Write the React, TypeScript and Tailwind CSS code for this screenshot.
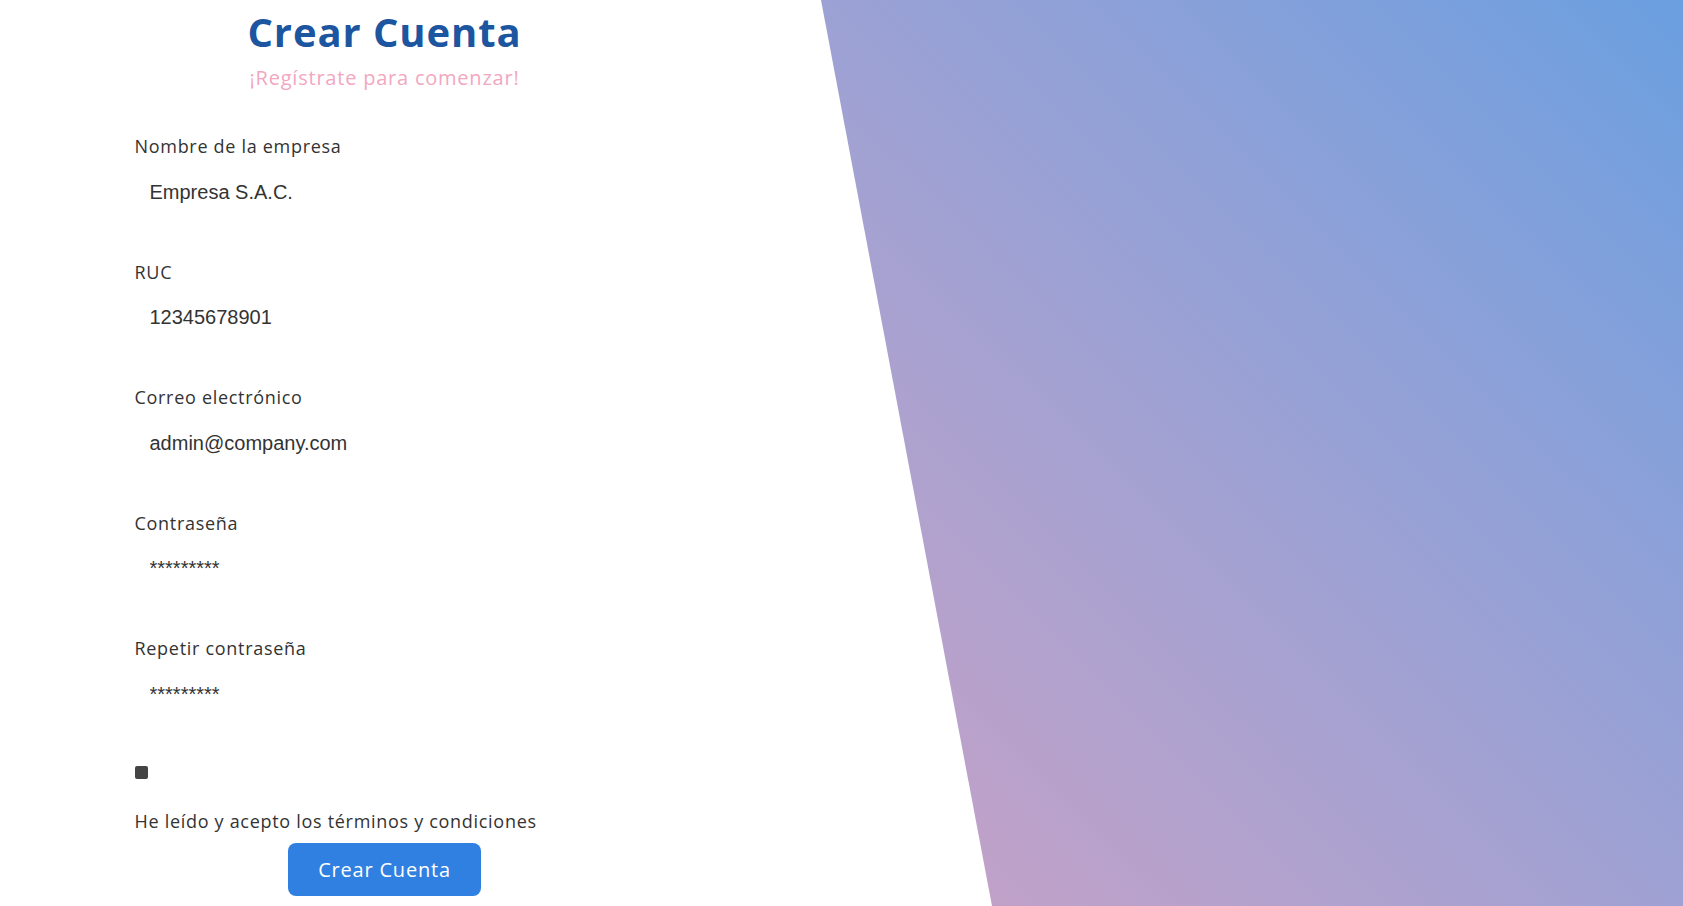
import React from "react";

const Field = ({ label, value }: { label: string; value: string }) => (
  <div className="flex flex-col">
    <label className="text-[18px] leading-[24px] text-[#333] font-['Open_Sans',sans-serif] tracking-[0.7px]">
      {label}
    </label>
    <input
      readOnly
      value={value}
      className="mt-[9px] h-[50px] w-full bg-white px-[15px] text-[20px] text-[#333] font-['Liberation_Sans',Arial,sans-serif] outline-none border-0"
    />
  </div>
);

export default function App() {
  return (
    <div className="flex h-screen w-full overflow-hidden bg-white">
      <div className="flex w-[769px] shrink-0 flex-col items-center pt-[8px] font-['Open_Sans',sans-serif]">
        <h1 className="text-[40px] leading-[48px] font-bold tracking-[0.9px] text-[#1c55a0]">Crear Cuenta</h1>
        <p className="mt-[8px] text-[20px] leading-[28px] tracking-[0.78px] text-[#f2a7c0]">¡Regístrate para comenzar!</p>
        <form className="mt-[42px] flex w-[500px] flex-col gap-[42.5px]">
          <Field label="Nombre de la empresa" value="Empresa S.A.C." />
          <Field label="RUC" value="12345678901" />
          <Field label="Correo electrónico" value="admin@company.com" />
          <Field label="Contraseña" value="*********" />
          <Field label="Repetir contraseña" value="*********" />
        </form>
        <div className="w-[500px] mt-[47px]">
          <div className="h-[13px] w-[13px] rounded-[2px] bg-[#444]" />
          <p className="mt-[30px] text-[18px] leading-[24px] text-[#333] tracking-[0.7px]">
            He leído y acepto los términos y condiciones
          </p>
        </div>
        <button className="mt-[10px] h-[53px] w-[193px] rounded-[8px] bg-[#2f80e0] text-[20px] font-medium tracking-[0.8px] text-white">
          Crear Cuenta
        </button>
      </div>
      <div className="flex-1 bg-gradient-to-tr from-[#cba1c5] to-[#6a9fe0] [clip-path:polygon(52px_0,100%_0,100%_100%,223px_100%)]" />
    </div>
  );
}
